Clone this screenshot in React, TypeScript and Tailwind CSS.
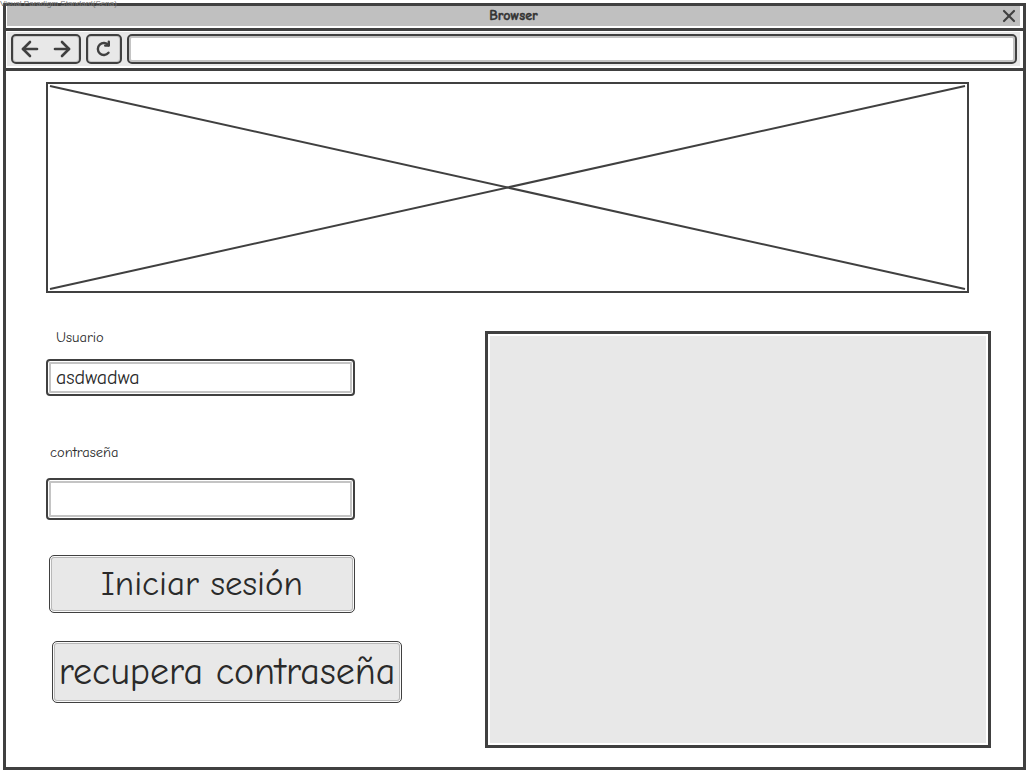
import { ArrowLeft, ArrowRight, X } from "lucide-react";

const sketch = { fontFamily: '"Comic Sans MS", "Comic Neue", "DejaVu Sans", sans-serif' };

function Refresh() {
  return (
    <svg width="20" height="20" viewBox="0 0 20 20" fill="none" stroke="#404040" strokeWidth="2.4" strokeLinecap="round" strokeLinejoin="round">
      <path d="M14.5 6.2 A6 6 0 1 0 14.5 13.8" />
      <path d="M14.8 2.8 V6.6 H11.2" />
    </svg>
  );
}

function TextBox({ value, h }: { value?: string; h: string }) {
  return (
    <div className={`w-[309px] ${h} rounded-[4px] border-2 border-[#404040] bg-white shadow-[inset_0_0_0_1px_#fff,inset_0_0_0_3px_#c4c4c4] flex items-center pl-[8px] text-[20px] text-[#2a2a2a]`}>
      {value}
    </div>
  );
}

export default function App() {
  return (
    <div className="relative w-[1030px] h-[774px] bg-white overflow-hidden" style={sketch}>
      {/* watermark */}
      <div className="absolute left-0 top-[-1px] z-10 text-[8px] leading-[10px] text-[#777] font-['Liberation_Sans',sans-serif] whitespace-nowrap">
        Visual Paradigm Standard(Sena)
      </div>

      <div className="ml-[3px] mt-[3px] w-[1023px] h-[767px] border-[3px] border-[#404040] flex flex-col">
        {/* title bar */}
        <div className="relative ml-[1px] mr-[3px] h-[20px] bg-[#c0c0c0] flex items-center justify-center">
          <span className="text-[14px] leading-[20px] font-bold text-[#333]" style={{ WebkitTextStroke: "0.4px #333" }}>Browser</span>
          <X className="absolute right-[1px] top-[0px] w-[20px] h-[20px] text-[#404040]" strokeWidth={2.6} />
        </div>
        <div className="h-[2px]" />
        <div className="h-[3px] bg-[#404040]" />
        <div className="h-[1px]" />

        {/* toolbar */}
        <div className="ml-[1px] mr-[3px] h-[34px] bg-[#e8e8e8] flex items-center gap-[5px] pl-[4px] pr-[3px]">
          <div className="w-[70px] h-[30px] rounded-[5px] border-2 border-[#404040] bg-[#e8e8e8] shadow-[inset_0_0_0_1px_#c8c8c8] flex items-center justify-center gap-[8px]">
            <ArrowLeft className="w-[24px] h-[24px] text-[#404040]" strokeWidth={2.6} />
            <ArrowRight className="w-[24px] h-[24px] text-[#404040]" strokeWidth={2.6} />
          </div>
          <div className="w-[36px] h-[30px] rounded-[5px] border-2 border-[#404040] bg-[#e8e8e8] shadow-[inset_0_0_0_1px_#c8c8c8] flex items-center justify-center">
            <Refresh />
          </div>
          <div className="flex-1 h-[30px] rounded-[5px] border-2 border-[#404040] bg-white shadow-[inset_0_0_0_2px_#c4c4c4]" />
        </div>
        <div className="h-[2px]" />
        <div className="h-[3px] bg-[#404040]" />

        {/* page content */}
        <div className="flex-1 pl-[40px] pt-[11px]">
          <div className="relative w-[923px] h-[211px] border-2 border-[#404040]">
            <svg className="absolute inset-0" width="919" height="207" viewBox="0 0 919 207" fill="none" stroke="#404040" strokeWidth="2">
              <line x1="2" y1="2" x2="917" y2="205" />
              <line x1="2" y1="205" x2="917" y2="2" />
            </svg>
          </div>

          <div className="flex items-start">
            <div className="w-[439px] flex flex-col items-start">
              <div className="mt-[37px] ml-[10px] text-[14.5px] leading-[16px] text-[#2a2a2a]">Usuario</div>
              <div className="mt-[13px]">
                <TextBox value="asdwadwa" h="h-[37px]" />
              </div>
              <div className="mt-[49px] ml-[4px] text-[14.5px] leading-[16px] text-[#2a2a2a]">contraseña</div>
              <div className="mt-[17px]">
                <TextBox h="h-[42px]" />
              </div>
              <button className="mt-[35px] ml-[3px] w-[306px] h-[58px] rounded-[5px] border-[1.5px] border-[#404040] bg-[#e8e8e8] shadow-[inset_0_0_0_1px_#fafafa,inset_0_0_0_2px_#b8b8b8] text-[35px] leading-[40px] text-[#2a2a2a] whitespace-nowrap">
                Iniciar sesión
              </button>
              <button className="mt-[28px] ml-[6px] w-[350px] h-[62px] rounded-[5px] border-[1.5px] border-[#404040] bg-[#e8e8e8] shadow-[inset_0_0_0_1px_#fafafa,inset_0_0_0_2px_#b8b8b8] text-[38px] leading-[44px] text-[#2a2a2a] whitespace-nowrap">
                recupera contraseña
              </button>
            </div>

            <div className="mt-[38px] w-[506px] h-[417px] border-[3px] border-[#404040] bg-[#e8e8e8] shadow-[inset_0_0_0_2px_#fff]" />
          </div>
        </div>
      </div>
    </div>
  );
}
